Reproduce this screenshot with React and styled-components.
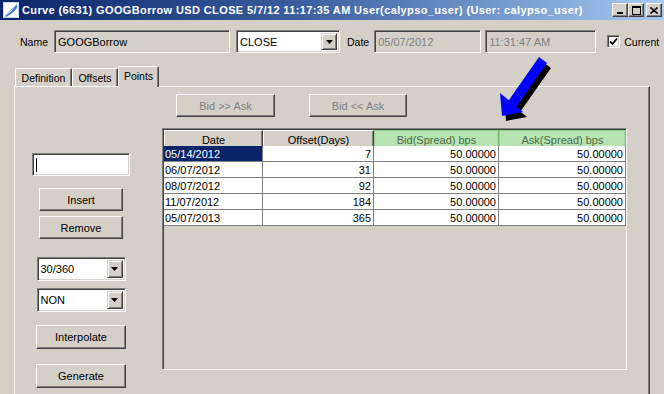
import React from "react";
import styled, { createGlobalStyle } from "styled-components";

const Global = createGlobalStyle`
  html, body { margin: 0; padding: 0; background: #d4d0c8; }
  * { box-sizing: border-box; }
`;

const Window = styled.div`
  position: relative;
  width: 664px;
  height: 394px;
  overflow: hidden;
  background: #d4d0c8;
  font-family: "Liberation Sans", Arial, sans-serif;
  font-size: 10.5px;
  color: #000;
`;

const TitleBar = styled.div`
  display: flex;
  align-items: center;
  height: 20px;
  padding: 0 2px 0 3px;
  background: linear-gradient(90deg, #0a246a 0%, #3a5ea0 45%, #a6caf0 100%);
  color: #fff;
  font-weight: bold;
  font-size: 11px;
  letter-spacing: 0.38px;
  white-space: nowrap;
`;

const TitleText = styled.span`
  margin-left: 3px;
  flex: 1;
`;

const TitleButtons = styled.div`
  display: flex;
  align-items: center;
`;

const TitleButton = styled.div`
  display: flex;
  align-items: center;
  justify-content: center;
  width: 16px;
  height: 14px;
  margin-left: ${(p) => p.$ml || 0}px;
  background: #d4d0c8;
  border: 1px solid;
  border-color: #fff #404040 #404040 #fff;
  box-shadow: inset -1px -1px #808080;
`;

const HeaderRow = styled.div`
  display: flex;
  align-items: center;
  height: 23px;
  margin-top: 10px;
  padding-left: 20px;
`;

const Label = styled.span`
  margin-left: ${(p) => p.$ml || 0}px;
`;

const Field = styled.div`
  display: flex;
  align-items: center;
  width: ${(p) => p.$w}px;
  height: ${(p) => p.$h || 23}px;
  margin-left: ${(p) => p.$ml || 0}px;
  margin-top: ${(p) => p.$mt || 0}px;
  padding-left: 3px;
  background: ${(p) => (p.$white ? "#fff" : "#d4d0c8")};
  color: ${(p) => (p.$muted ? "#808080" : "#000")};
  border: 1px solid;
  border-color: #808080 #fff #fff #808080;
  box-shadow: inset 1px 1px #404040, inset -1px -1px #d4d0c8;
  font-size: 11px;
`;

const FieldText = styled.span`
  flex: 1;
  white-space: nowrap;
`;

const Caret = styled.span`
  width: 1px;
  height: 14px;
  background: #000;
`;

const DropButton = styled.div`
  display: flex;
  align-items: center;
  justify-content: center;
  width: 16px;
  height: calc(100% - 4px);
  margin-right: 2px;
  background: #d4d0c8;
  border: 1px solid;
  border-color: #d4d0c8 #404040 #404040 #d4d0c8;
  box-shadow: inset 1px 1px #fff, inset -1px -1px #808080;
`;

const Check = styled.div`
  display: flex;
  align-items: center;
  justify-content: center;
  width: 13px;
  height: 13px;
  margin-left: 11px;
  background: #fff;
  border: 1px solid;
  border-color: #808080 #fff #fff #808080;
  box-shadow: inset 1px 1px #404040, inset -1px -1px #d4d0c8;
`;

const TabStrip = styled.div`
  display: flex;
  align-items: flex-end;
  height: 20px;
  margin-top: 13px;
  padding-left: 15px;
`;

const Tab = styled.div`
  position: relative;
  z-index: ${(p) => (p.$active ? 2 : 1)};
  display: flex;
  align-items: center;
  justify-content: center;
  width: ${(p) => p.$w}px;
  height: ${(p) => (p.$active ? 21 : 18)}px;
  margin-bottom: ${(p) => (p.$active ? -1 : 0)}px;
  padding-bottom: ${(p) => (p.$active ? 3 : 0)}px;
  background: #d4d0c8;
  border-top: 1px solid #fff;
  border-left: 1px solid #fff;
  border-right: 1px solid #404040;
  border-radius: 2px 2px 0 0;
  box-shadow: inset -1px 0 #808080;
`;

const Panel = styled.div`
  display: flex;
  width: 636px;
  height: 320px;
  margin-left: 14px;
  border-top: 1px solid #fff;
  border-left: 1px solid #fff;
  border-right: 1px solid #404040;
  box-shadow: inset -1px 0 #808080;
`;

const LeftCol = styled.div`
  display: flex;
  flex-direction: column;
  align-items: center;
  width: 132px;
  padding-top: 66px;
`;

const RightCol = styled.div`
  display: flex;
  flex-direction: column;
  margin-left: 15px;
  padding-top: 7px;
`;

const ButtonRow = styled.div`
  display: flex;
  gap: 34px;
  padding-left: 14px;
`;

const Button = styled.div`
  display: flex;
  align-items: center;
  justify-content: center;
  width: ${(p) => p.$w}px;
  height: ${(p) => p.$h || 23}px;
  margin-top: ${(p) => p.$mt || 0}px;
  background: #d4d0c8;
  color: ${(p) => (p.$disabled ? "#808080" : "#000")};
  border: 1px solid;
  border-color: #fff #404040 #404040 #fff;
  box-shadow: inset -1px -1px #808080;
  font-size: 11px;
`;

const TableFrame = styled.div`
  width: 465px;
  height: 242px;
  margin-top: 11px;
  background: #d4d0c8;
  border: 1px solid;
  border-color: #808080 #fff #fff #808080;
  box-shadow: inset 1px 1px #404040;
  padding: 1px 0 0 1px;
`;

const Grid = styled.div`
  display: grid;
  grid-template-columns: 99px 111px 125px 127px;
  grid-auto-rows: 16px;
`;

const HeadCell = styled.div`
  display: flex;
  align-items: center;
  justify-content: center;
  height: 19px;
  background: ${(p) => (p.$green ? "#b6e3b1" : "#d4d0c8")};
  color: ${(p) => (p.$green ? "#4b6b49" : "#000")};
  border: 1px solid;
  border-color: ${(p) =>
    p.$green ? "#8fd08a #6fbd69 #6fbd69 #8fd08a" : "#fff #404040 #404040 #fff"};
  box-shadow: ${(p) => (p.$green ? "inset -1px -1px #a4d99f" : "inset -1px -1px #808080")};
  font-size: 11px;
`;

const Cell = styled.div`
  display: flex;
  align-items: center;
  justify-content: ${(p) => (p.$right ? "flex-end" : "flex-start")};
  padding: 0 2px 0 1px;
  background: ${(p) => (p.$selected ? "#0a246a" : "#fff")};
  color: ${(p) => (p.$selected ? "#fff" : "#000")};
  border-right: 1px solid #808080;
  border-bottom: 1px solid #808080;
  font-size: 11px;
  white-space: nowrap;
`;

const ArrowLayer = styled.svg`
  position: absolute;
  left: 495px;
  top: 50px;
`;

const rows = [
  ["05/14/2012", "7"],
  ["06/07/2012", "31"],
  ["08/07/2012", "92"],
  ["11/07/2012", "184"],
  ["05/07/2013", "365"],
];

const Tri = () => (
  <svg width="7" height="4" viewBox="0 0 7 4">
    <path d="M0 0h7L3.5 4z" fill="#000" />
  </svg>
);

const arrowPts = [
  [539, 57],
  [547, 63],
  [516.5, 106.6],
  [523, 112],
  [502, 116],
  [500, 93],
  [508.8, 100.3],
];
const pts = (dx, dy) =>
  arrowPts.map(([x, y]) => `${x - 495 + dx},${y - 50 + dy}`).join(" ");

export default function App() {
  return (
    <Window>
      <Global />
      <TitleBar>
        <svg width="16" height="16" viewBox="0 0 16 16">
          <rect x="0.5" y="0.5" width="15" height="15" fill="#fff" stroke="#c8d8f0" />
          <path d="M2 14 C6 12 10 7 14 2 L14 6 C11 10 7 13 3 15 Z" fill="#3a78c8" />
          <path d="M2 14 L14 2" stroke="#9cc0ea" strokeWidth="1" />
        </svg>
        <TitleText>
          Curve (6631) GOOGBorrow USD CLOSE 5/7/12 11:17:35 AM User(calypso_user) (User: calypso_user)
        </TitleText>
        <TitleButtons>
          <TitleButton>
            <svg width="8" height="8" viewBox="0 0 8 8">
              <rect x="1" y="6" width="6" height="2" fill="#000" />
            </svg>
          </TitleButton>
          <TitleButton>
            <svg width="9" height="9" viewBox="0 0 9 9">
              <rect x="0.5" y="0.5" width="8" height="8" fill="none" stroke="#000" />
              <rect x="0" y="1" width="9" height="1" fill="#000" />
            </svg>
          </TitleButton>
          <TitleButton $ml={2}>
            <svg width="8" height="7" viewBox="0 0 8 7">
              <path d="M0.5 0.5L7.5 6.5M7.5 0.5L0.5 6.5" stroke="#000" strokeWidth="1.6" />
            </svg>
          </TitleButton>
        </TitleButtons>
      </TitleBar>

      <HeaderRow>
        <Label>Name</Label>
        <Field $w={176} $ml={6}>
          <FieldText>GOOGBorrow</FieldText>
        </Field>
        <Field $w={104} $ml={6} $white>
          <FieldText>CLOSE</FieldText>
          <DropButton>
            <Tri />
          </DropButton>
        </Field>
        <Label $ml={7}>Date</Label>
        <Field $w={107} $ml={5} $muted>
          <FieldText>05/07/2012</FieldText>
        </Field>
        <Field $w={111} $ml={4} $muted>
          <FieldText>11:31:47 AM</FieldText>
        </Field>
        <Check>
          <svg width="9" height="9" viewBox="0 0 9 9">
            <path d="M1 4.5L3.5 7L8 1.5" fill="none" stroke="#000" strokeWidth="1.8" />
          </svg>
        </Check>
        <Label $ml={4}>Current</Label>
      </HeaderRow>

      <TabStrip>
        <Tab $w={57}>Definition</Tab>
        <Tab $w={46}>Offsets</Tab>
        <Tab $w={41} $active>
          Points
        </Tab>
      </TabStrip>

      <Panel>
        <LeftCol>
          <Field $w={98} $white>
            <Caret />
          </Field>
          <Button $w={84} $mt={12}>Insert</Button>
          <Button $w={84} $mt={5}>Remove</Button>
          <Field $w={89} $h={24} $mt={18} $white>
            <FieldText>30/360</FieldText>
            <DropButton>
              <Tri />
            </DropButton>
          </Field>
          <Field $w={89} $h={24} $mt={7} $white>
            <FieldText>NON</FieldText>
            <DropButton>
              <Tri />
            </DropButton>
          </Field>
          <Button $w={90} $h={24} $mt={13}>Interpolate</Button>
          <Button $w={90} $h={24} $mt={15}>Generate</Button>
        </LeftCol>

        <RightCol>
          <ButtonRow>
            <Button $w={99} $disabled>Bid &gt;&gt; Ask</Button>
            <Button $w={98} $disabled>Bid &lt;&lt; Ask</Button>
          </ButtonRow>
          <TableFrame>
            <Grid>
              <HeadCell>Date</HeadCell>
              <HeadCell>Offset(Days)</HeadCell>
              <HeadCell $green>Bid(Spread) bps</HeadCell>
              <HeadCell $green>Ask(Spread) bps</HeadCell>
              {rows.map(([d, o], i) => (
                <React.Fragment key={d}>
                  <Cell $selected={i === 0}>{d}</Cell>
                  <Cell $right>{o}</Cell>
                  <Cell $right>50.00000</Cell>
                  <Cell $right>50.00000</Cell>
                </React.Fragment>
              ))}
            </Grid>
          </TableFrame>
        </RightCol>
      </Panel>

      <ArrowLayer width="65" height="75" viewBox="0 0 65 75">
        <polygon points={pts(4, 5)} fill="#000" />
        <polygon points={pts(0, 0)} fill="#0000ff" />
      </ArrowLayer>
    </Window>
  );
}
